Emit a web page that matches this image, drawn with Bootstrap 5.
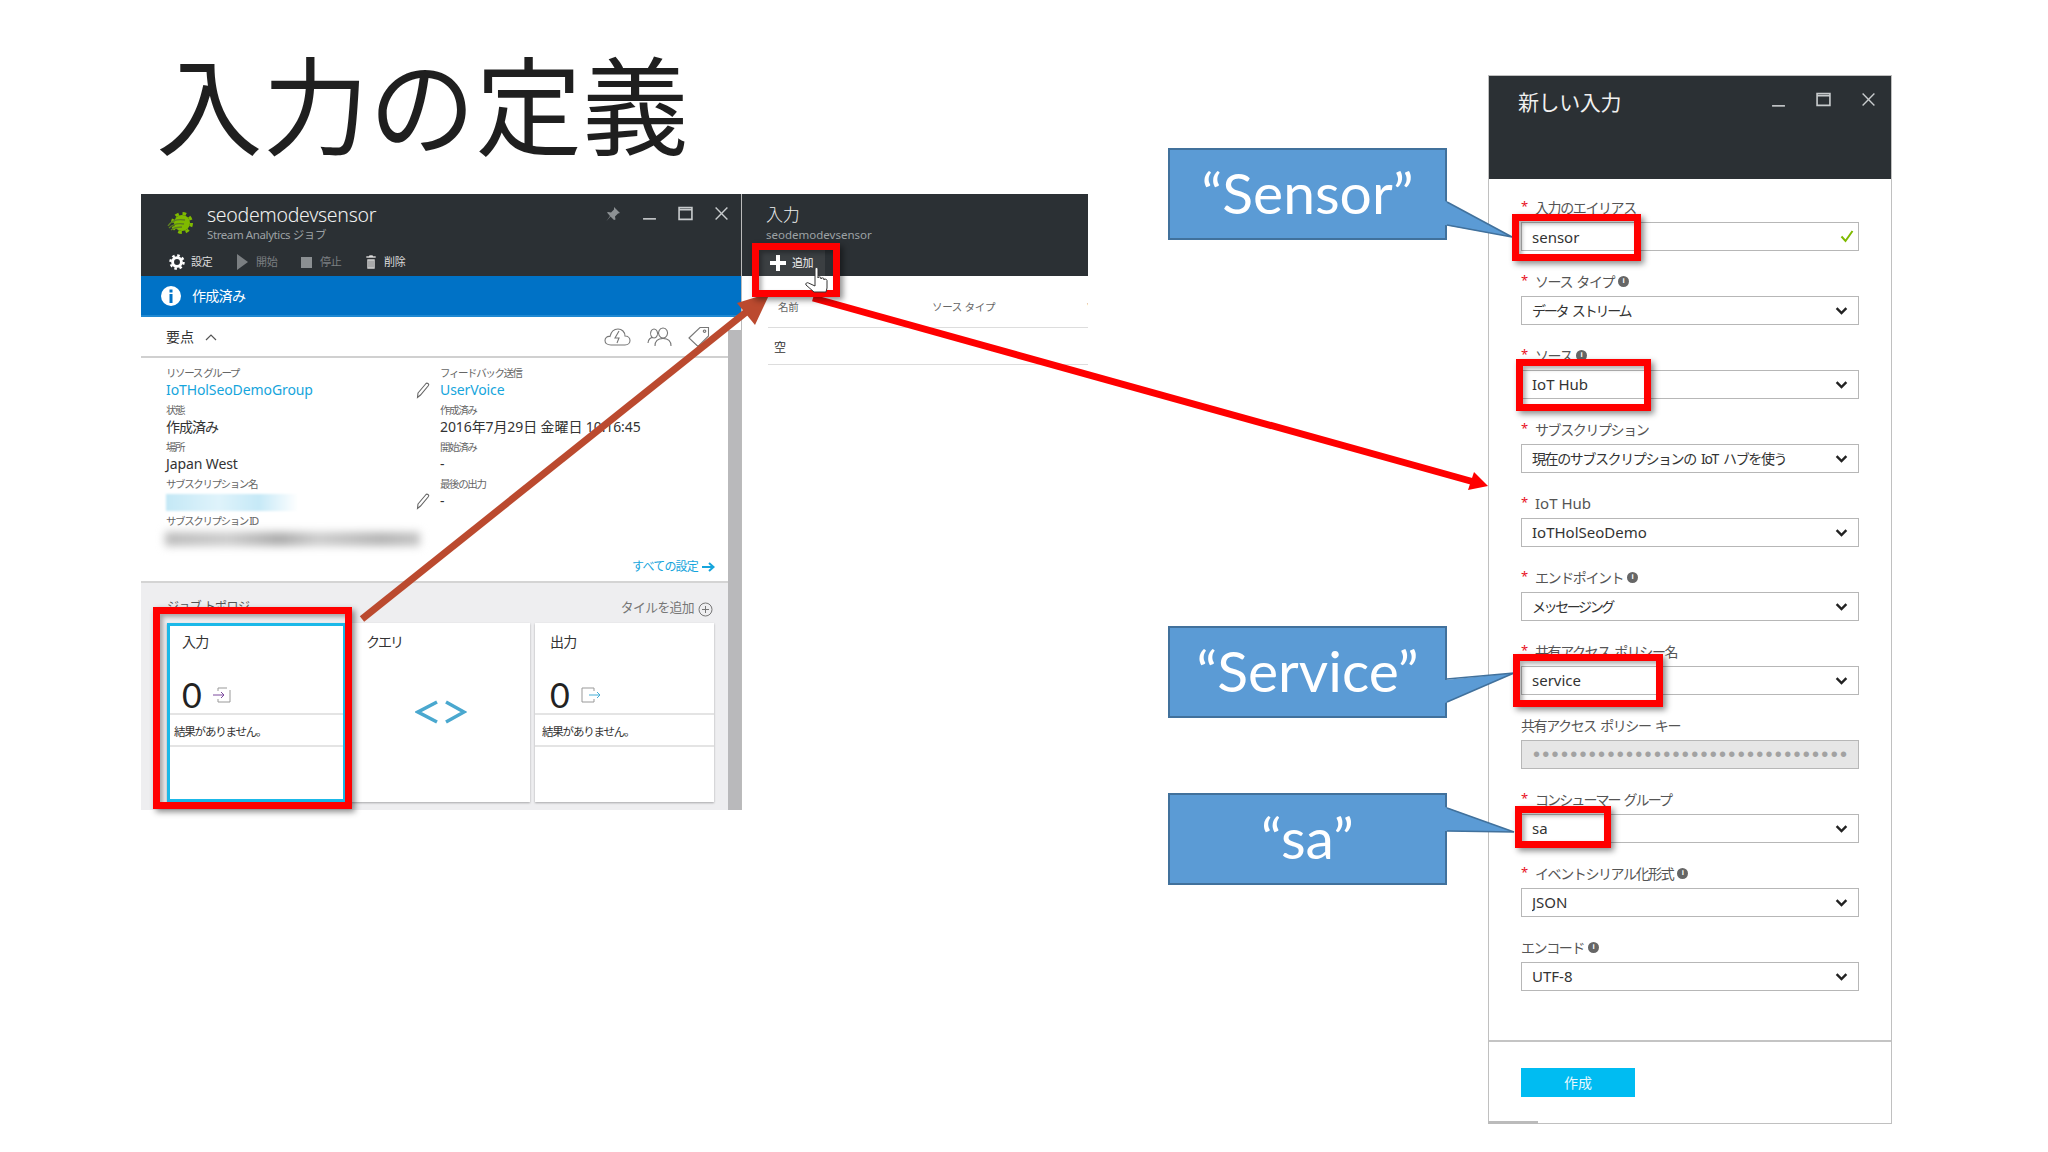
<!DOCTYPE html>
<html lang="ja">

<head>
  <meta charset="UTF-8">
  <meta name="viewport" content="width=device-width, initial-scale=1.0">
  <title>入力の定義</title>
  <link rel="stylesheet" href="https://cdn.jsdelivr.net/npm/bootstrap@5.3.2/dist/css/bootstrap.min.css">
  <style>
    body {
      margin: 0;
      background: #fff;
      font-family: "Noto Sans", "Noto Sans CJK JP", sans-serif;
      color: #333;
    }

    .slide { position: relative; width: 2048px; height: 1152px; overflow: hidden; }
    .slide-title {
      position: absolute; left: 156px; top: 48px; margin: 0;
      font: 400 106.5px/1 "Noto Sans CJK JP", sans-serif; color: #1f1f1f;
    }

    /* portal blades */
    .blades { position: absolute; left: 141px; top: 194px; width: 947px; height: 616px; }
    .blade-a { width: 600px; }
    .blade-b { width: 347px; border-left: 1px solid #bbb; overflow: hidden; }
    .dark-head { height: 82px; flex-shrink: 0; background: #2b3034; color: #fff; }
    .head-title { font-size: 19.5px; font-weight: 300; line-height: 26px; letter-spacing: -.3px; color: #f0f0f0; }
    .head-sub { font-size: 11.5px; line-height: 14px; letter-spacing: -.4px; color: #9da2a5; }
    .win-btns { gap: 21px; padding: 12px 12px 0 0; color: #c8cbcd; }
    .tool-row { height: 28px; padding-left: 28px; font-size: 11px; letter-spacing: -.3px; color: #ddd; }
    .tool-off { color: #7b7f82; }
    .info-bar { height: 41px; flex-shrink: 0; background: #0072c6; color: #fff; font-size: 14px; letter-spacing: -.7px; padding-left: 20px; gap: 11px; border-bottom: 2px solid #1e88d2; }
    .ess-head { height: 41px; flex-shrink: 0; border-bottom: 2px solid #d0d0d0; padding: 0 18px 0 25px; font-size: 14px; }
    .ess-chev { margin-left: 11px; }
    .ess-body { padding: 7px 0 0 25px; height: 199px; flex-shrink: 0; }
    .ess-col { width: 274px; }
    .ess-lbl { font-size: 10.5px; line-height: 16px; letter-spacing: -1.4px; color: #666; }
    .ess-val { font-size: 14px; line-height: 17px; height: 21px; letter-spacing: -.1px; padding-right: 10px; color: #333; }
    .ess-link { color: #16a5dc; }
    .blur-name { width: 132px; height: 17px; margin-top: 2px; background: linear-gradient(90deg, #c4e8f6, #dff3fb 40%, #c6e9f7 70%, #fff); filter: blur(1px); }
    .blur-id { width: 255px; height: 14px; margin: 3px 0 0 -1px; background: linear-gradient(90deg, #bbb, #ccc 25%, #aaa 45%, #ccc 60%, #b4b4b4 85%, #c4c4c4); filter: blur(4px); }
    .all-set { font-size: 12px; letter-spacing: -.8px; color: #16a5dc; padding-right: 13px; height: 19px; flex-shrink: 0; }
    .scroll-bar { width: 13px; flex-shrink: 0; margin-top: 13px; background: #b9b9bb; }
    .topo { height: 229px; flex-shrink: 0; background: #eeeef0; border-top: 2px solid #d4d4d4; padding: 15px 14px 0 26px; }
    .topo-head { height: 25px; font-size: 12px; letter-spacing: -.6px; color: #555; }
    .topo-add { color: #777; font-size: 12.8px; margin-right: 1px; }
    .tile-grid { display: grid; grid-template-columns: repeat(3, 1fr); gap: 5px; height: 179px; }
    .tile-box { background: #fff; box-shadow: 0 1px 2px rgba(0, 0, 0, .3); font-size: 14px; letter-spacing: -.8px; }
    .tile-on { outline: 3px solid #1bb8e8; outline-offset: -3px; }
    .tile-lbl { height: 48px; padding: 10px 0 0 15px; line-height: 18px; }
    .tile-lbl-q { padding-top: 10px; letter-spacing: -2px; }
    .tile-count { height: 44px; padding: 5px 0 0 15px; border-bottom: 2px solid #e4e4e4; font: 400 34px/1 "Lato", sans-serif; color: #222; gap: 12px; }
    .tile-note { height: 32px; padding: 4px 0 0 7px; border-bottom: 2px solid #e4e4e4; font-size: 11.5px; letter-spacing: -1.2px; }
    .tile-code { height: 131px; }
    .tbl-head { height: 52px; margin-left: 26px; border-bottom: 1px solid #ddd; padding-top: 24px; font-size: 10.5px; color: #666; }
    .tbl-cell { width: 154px; flex-shrink: 0; padding-left: 10px; white-space: nowrap; letter-spacing: -.3px; }
    .tbl-row { height: 37px; margin-left: 26px; border-bottom: 1px solid #ddd; font-size: 12px; padding: 11px 0 0 6px; }
    .add-btn { height: 26px; width: 67px; margin-left: 16px; background: #3b3f42; gap: 6px; font-size: 11px; letter-spacing: -.5px; color: #eee; padding-left: 12px; }

    /* new input panel */
    .new-input { position: absolute; left: 1488px; top: 75px; width: 404px; height: 1049px; border: 1px solid #c0c0c0; background: #fff; }
    .new-head { height: 103px; flex-shrink: 0; background: #2b3034; color: #f0f0f0; padding-left: 29px; }
    .new-title { font-size: 21px; letter-spacing: -.4px; line-height: 26px; margin-top: 13px; }
    .new-btns { gap: 0; color: #c8cbcd; }
    .form-area { padding: 21px 32px 0; height: 861px; flex-shrink: 0; }
    .fld-group { height: 74px; }
    .fld-lbl { display: flex; align-items: center; height: 22px; padding-bottom: 8px; margin: 0; font-size: 14px; letter-spacing: -1.4px; word-spacing: 2px; color: #555; }
    .lbl-latin { font-size: 15px; letter-spacing: 0; word-spacing: 0; }
    .lbl-tight { letter-spacing: -1.9px; }
    .req-star { color: #e81123; width: 14px; font-size: 13px; letter-spacing: 0; }
    .i-dot {
      display: inline-flex; align-items: center; justify-content: center; width: 11px; height: 11px; margin-left: 4px;
      border-radius: 50%; background: #666; color: #fff; font: 700 8px/1 "Liberation Sans", sans-serif; letter-spacing: 0;
    }
    .fld-ctl.form-control, .fld-ctl.form-select {
      height: 29px; padding: 0 30px 0 10px; border: 1px solid #b7b7b7; border-radius: 0; box-shadow: none;
      font-size: 15px; color: #333; line-height: 27px;
    }
    .fld-ctl.form-select {
      background-size: 13px 10px; background-position: right 10px center;
      background-image: url("data:image/svg+xml,%3csvg xmlns='http://www.w3.org/2000/svg' viewBox='0 0 16 12'%3e%3cpath fill='none' stroke='%23222' stroke-width='3' d='M2 2.500l6 6 6-6'/%3e%3c/svg%3e");
    }
    .cjk-long.fld-ctl { font-size: 14px; letter-spacing: -1.4px; word-spacing: 3px; }
    .cjk-tight.fld-ctl { font-size: 14px; letter-spacing: -2.2px; word-spacing: 3px; }
    .cjk-tighter.fld-ctl { font-size: 14px; letter-spacing: -2.4px; }
    .dots-ctl.form-control:disabled {
      background: #e6e6e6; color: #a2a2a2; opacity: 1;
      font: 400 20px/27px "Liberation Sans", sans-serif; letter-spacing: 2.3px; padding: 0 0 0 11px;
    }
    .ok-tick { position: absolute; right: 5px; top: 7px; }
    .new-foot { border-top: 2px solid #c4c4c4; padding: 26px 0 0 32px; }
    .make-btn { width: 114px; height: 29px; padding: 0; background: #00bcf2; color: #e6f8fe; font-size: 14px; border-radius: 0; border: 0; }
    .corner-bar { position: absolute; left: -1px; bottom: -1px; width: 50px; height: 3px; background: #bbb; }

    /* callouts */
    .call-box {
      position: absolute; left: 1168px; width: 279px; height: 92px; background: #5b9bd5; border: 2px solid #41719c;
      padding-bottom: 3px; color: #fff; font: 400 57px/1 "Lato", sans-serif;
    }
    .call-sensor { top: 148px; }
    .call-service { top: 626px; }
    .call-sa { top: 793px; }
    .draw-layer { position: absolute; left: 0; top: 0; }

    /* red frames */
    .red-frame { position: absolute; border: 7px solid #f00; box-shadow: 3px 3px 6px rgba(0, 0, 0, .45), inset 3px 3px 4px rgba(0, 0, 0, .3); }
    .rf-tile { left: 153px; top: 607px; width: 199px; height: 202px; }
    .rf-add { left: 752px; top: 243px; width: 88px; height: 54px; }
    .rf-sensor { left: 1512px; top: 214px; width: 129px; height: 47px; }
    .rf-hub { left: 1516px; top: 359px; width: 135px; height: 52px; }
    .rf-service { left: 1513px; top: 654px; width: 150px; height: 53px; }
    .rf-sa { left: 1515px; top: 806px; width: 96px; height: 42px; }
    .hand-cursor { position: absolute; left: 804px; top: 267px; }
  </style>
</head>

<body>
  <svg width="0" height="0" class="position-absolute">
    <symbol id="ic-min" viewBox="0 0 14 14"><path d="M1 12h12" stroke="currentColor" stroke-width="1.500"/></symbol>
    <symbol id="ic-max" viewBox="0 0 14 14"><path d="M1 1.500h12v11H1z M1 3.500h12" fill="none" stroke="currentColor" stroke-width="1.500"/></symbol>
    <symbol id="ic-close" viewBox="0 0 14 14"><path d="M1.500 1.500l11 11M12.500 1.500l-11 11" stroke="currentColor" stroke-width="1.300"/></symbol>
    <symbol id="ic-pencil" viewBox="0 0 14 18"><path d="M2 12L10 2.500c1-1 3.500 .5 2.500 2L4.500 14 1.500 16.500z" fill="none" stroke="#666" stroke-width="1.100"/></symbol>
  </svg>

  <div class="slide">
    <h1 class="slide-title">入力の定義</h1>

    <div class="blades d-flex">
      <section class="blade-a d-flex flex-column">
        <div class="dark-head d-flex flex-column">
          <div class="d-flex">
            <div class="d-flex gap-2 flex-grow-1" style="padding:8px 0 0 26px">
              <svg width="27" height="24" viewBox="0 0 27 24" style="margin:9px 5px 0 0">
                <circle cx="15" cy="12" r="8" fill="#7fba00"/>
                <circle cx="15" cy="12" r="9.500" fill="none" stroke="#7fba00" stroke-width="3" stroke-dasharray="3.700 3.800"/>
                <path d="M1 15c4-6 9-7 17-6M2 17c4-4 9-5 15-4M4 19c4-3 7-3 11-3" fill="none" stroke="#5d7f22" stroke-width="1.300"/>
              </svg>
              <div>
                <div class="head-title">seodemodevsensor</div>
                <div class="head-sub">Stream Analytics ジョブ</div>
              </div>
            </div>
            <div class="win-btns d-flex">
              <svg width="16" height="16" viewBox="0 0 16 16"><path d="M9 1l6 6-2 .5-3 3 .5 3L9 14 5.500 10.500 1.500 15l3.500-5L2 6.500 3 6l3 .5 3-3z" fill="#8d9194"/></svg>
              <svg width="15" height="15"><use href="#ic-min"/></svg>
              <svg width="15" height="15"><use href="#ic-max"/></svg>
              <svg width="15" height="15"><use href="#ic-close"/></svg>
            </div>
          </div>
          <div class="tool-row d-flex align-items-center mt-auto">
            <svg width="16" height="16" viewBox="0 0 20 20" class="me-1">
              <circle cx="10" cy="10" r="5.500" fill="none" stroke="#fff" stroke-width="3.600"/>
              <circle cx="10" cy="10" r="8.200" fill="none" stroke="#fff" stroke-width="3" stroke-dasharray="3.220 3.220"/>
            </svg>
            <span style="width:48px;padding-left:2px">設定</span>
            <svg width="11" height="16" viewBox="0 0 11 16"><path d="M0 0l11 8-11 8z" fill="#7b7f82"/></svg>
            <span class="tool-off" style="width:53px;padding-left:8px">開始</span>
            <svg width="11" height="11" viewBox="0 0 11 11"><path d="M0 0h11v11H0z" fill="#8b8f92"/></svg>
            <span class="tool-off" style="width:54px;padding-left:8px">停止</span>
            <svg width="10" height="14" viewBox="0 0 10 14"><path d="M3 0h4v1h3v2H0V1h3zM1 4h8v10H1zM3 5.500v7M5 5.500v7M7 5.500v7" fill="#ddd" stroke="#2b3034" stroke-width=".6"/></svg>
            <span class="ps-2">削除</span>
          </div>
        </div>
        <div class="info-bar d-flex align-items-center">
          <svg width="20" height="20" viewBox="0 0 20 20"><circle cx="10" cy="10" r="10" fill="#fff"/><path d="M8.500 3.500h3v3h-3zM8.500 8h3v9h-3z" fill="#0072c6"/></svg>
          <span>作成済み</span>
        </div>
        <div class="d-flex flex-grow-1">
          <div class="flex-grow-1 d-flex flex-column">
            <div class="ess-head d-flex align-items-center">
              <span>要点</span>
              <svg class="ess-chev" width="12" height="8" viewBox="0 0 12 8"><path d="M1 7l5-5 5 5" fill="none" stroke="#555" stroke-width="1.200"/></svg>
              <div class="ms-auto d-flex align-items-center" style="gap:16px">
                <svg width="27" height="18" viewBox="0 0 27 18"><path d="M7 17C3 17 1 15 1 12.500S3 8 6 8.500C7 4 10 1 14 1c4 0 7 3 7 7 3 0 5 2 5 4.500S24 17 21 17zM15 3l-4 7h4l-2 5" fill="none" stroke="#777" stroke-width="1.100"/></svg>
                <svg width="25" height="20" viewBox="0 0 25 20"><path d="M7 2a3.500 4.500 0 1 0 .1 0zM1 16c0-4 3-5.500 5-5.500M16 1a4.500 5 0 1 0 .1 0zM8 19c0-5 3-7.500 8-7.500s8 2.500 8 7.500" fill="none" stroke="#777" stroke-width="1.100"/></svg>
                <svg width="22" height="21" viewBox="0 0 22 21"><path d="M1 12L12 1.500h8.500V10L10 20.500zM16.500 4a1.200 1.200 0 1 0 .1 0z" fill="none" stroke="#777" stroke-width="1.100"/></svg>
              </div>
            </div>
            <div class="ess-body d-flex">
              <div class="ess-col">
                <div class="ess-lbl">リソース グループ</div>
                <div class="ess-val ess-link d-flex justify-content-between">IoTHolSeoDemoGroup<svg width="14" height="18"><use href="#ic-pencil"/></svg></div>
                <div class="ess-lbl">状態</div>
                <div class="ess-val" style="letter-spacing:-1px">作成済み</div>
                <div class="ess-lbl">場所</div>
                <div class="ess-val">Japan West</div>
                <div class="ess-lbl">サブスクリプション名</div>
                <div class="ess-val d-flex justify-content-between"><div class="blur-name"></div><svg width="14" height="18"><use href="#ic-pencil"/></svg></div>
                <div class="ess-lbl">サブスクリプション ID</div>
                <div class="ess-val"><div class="blur-id"></div></div>
              </div>
              <div>
                <div class="ess-lbl">フィードバック送信</div>
                <div class="ess-val ess-link">UserVoice</div>
                <div class="ess-lbl">作成済み</div>
                <div class="ess-val">2016年7月29日 金曜日 10:16:45</div>
                <div class="ess-lbl">開始済み</div>
                <div class="ess-val">-</div>
                <div class="ess-lbl">最後の出力</div>
                <div class="ess-val">-</div>
              </div>
            </div>
            <div class="all-set d-flex align-items-center justify-content-end gap-1">
              すべての設定
              <svg width="13" height="10" viewBox="0 0 13 10"><path d="M0 5h11M7 1l4.500 4L7 9" fill="none" stroke="#16a5dc" stroke-width="2"/></svg>
            </div>
            <div class="topo mt-auto">
              <div class="topo-head d-flex justify-content-between">
                <span>ジョブ トポロジ</span>
                <span class="topo-add d-flex align-items-start gap-1">タイルを追加
                  <svg width="15" height="15" viewBox="0 0 15 15" class="mt-1"><circle cx="7.500" cy="7.500" r="6.500" fill="none" stroke="#777"/><path d="M7.500 4v7M4 7.500h7" stroke="#777"/></svg>
                </span>
              </div>
              <div class="tile-grid">
                <div class="tile-box tile-on">
                  <div class="tile-lbl">入力</div>
                  <div class="tile-count d-flex align-items-center">0
                    <svg width="18" height="16" viewBox="0 0 18 16"><path d="M5 4V1h12v14H5v-3" fill="none" stroke="#999" stroke-dasharray="12 5 40"/><path d="M0 8h11M8 5l3 3-3 3" fill="none" stroke="#7d4a9e"/></svg>
                  </div>
                  <div class="tile-note d-flex align-items-center">結果がありません。</div>
                </div>
                <div class="tile-box">
                  <div class="tile-lbl tile-lbl-q">クエリ</div>
                  <div class="tile-code d-flex justify-content-center">
                    <svg width="52" height="24" viewBox="0 0 52 24" style="margin-top:29px"><path d="M22 2L3 12l19 10M31 2l18 10-18 10" fill="none" stroke="#4aa8cf" stroke-width="3.500"/></svg>
                  </div>
                </div>
                <div class="tile-box">
                  <div class="tile-lbl">出力</div>
                  <div class="tile-count d-flex align-items-center">0
                    <svg width="20" height="16" viewBox="0 0 20 16"><path d="M13 4V1H1v14h12v-3" fill="none" stroke="#999"/><path d="M8 8h11M16 5l3 3-3 3" fill="none" stroke="#45add6"/></svg>
                  </div>
                  <div class="tile-note d-flex align-items-center">結果がありません。</div>
                </div>
              </div>
            </div>
          </div>
          <div class="scroll-bar"></div>
        </div>
      </section>

      <section class="blade-b">
        <div class="dark-head d-flex flex-column">
          <div style="padding:8px 0 0 24px">
            <div class="head-title" style="font-size:17px">入力</div>
            <div class="head-sub" style="font-size:11.5px;letter-spacing:0">seodemodevsensor</div>
          </div>
          <div class="add-btn d-flex align-items-center mt-auto">
            <svg width="16" height="16" viewBox="0 0 16 16"><path d="M6 0h4v6h6v4h-6v6H6v-6H0V6h6z" fill="#fff"/></svg>
            <span>追加</span>
          </div>
        </div>
        <div class="tbl-head d-flex">
          <div class="tbl-cell">名前</div>
          <div class="tbl-cell">ソース タイプ</div>
          <div class="tbl-cell">ソース</div>
        </div>
        <div class="tbl-row">空</div>
      </section>
    </div>

    <section class="new-input d-flex flex-column">
      <div class="new-head d-flex justify-content-between">
        <div class="new-title">新しい入力</div>
        <div class="new-btns d-flex">
          <svg width="15" height="15" style="margin:17px 29px 0 0"><use href="#ic-min"/></svg>
          <svg width="17" height="15" style="margin:16px 29px 0 0"><use href="#ic-max"/></svg>
          <svg width="15" height="15" style="margin:16px 15px 0 0"><use href="#ic-close"/></svg>
        </div>
      </div>
      <form class="form-area">
        <div class="fld-group">
          <label class="fld-lbl"><span class="req-star">*</span>入力のエイリアス</label>
          <div class="position-relative">
            <input class="form-control fld-ctl" value="sensor">
            <svg class="ok-tick" width="14" height="14" viewBox="0 0 14 14"><path d="M1.500 7.500l4 4.500 7-10" fill="none" stroke="#7fba00" stroke-width="2"/></svg>
          </div>
        </div>
        <div class="fld-group">
          <label class="fld-lbl"><span class="req-star">*</span>ソース タイプ<span class="i-dot">i</span></label>
          <select class="form-select fld-ctl cjk-tight"><option>データ ストリーム</option></select>
        </div>
        <div class="fld-group">
          <label class="fld-lbl"><span class="req-star">*</span>ソース<span class="i-dot">i</span></label>
          <select class="form-select fld-ctl"><option>IoT Hub</option></select>
        </div>
        <div class="fld-group">
          <label class="fld-lbl"><span class="req-star">*</span>サブスクリプション</label>
          <select class="form-select fld-ctl cjk-long"><option>現在のサブスクリプションの IoT ハブを使う</option></select>
        </div>
        <div class="fld-group">
          <label class="fld-lbl lbl-latin"><span class="req-star">*</span>IoT Hub</label>
          <select class="form-select fld-ctl"><option>IoTHolSeoDemo</option></select>
        </div>
        <div class="fld-group">
          <label class="fld-lbl"><span class="req-star">*</span>エンドポイント<span class="i-dot">i</span></label>
          <select class="form-select fld-ctl cjk-tighter"><option>メッセージング</option></select>
        </div>
        <div class="fld-group">
          <label class="fld-lbl"><span class="req-star">*</span>共有アクセス ポリシー名</label>
          <select class="form-select fld-ctl"><option>service</option></select>
        </div>
        <div class="fld-group">
          <label class="fld-lbl">共有アクセス ポリシー キー</label>
          <input class="form-control fld-ctl dots-ctl" disabled value="••••••••••••••••••••••••••••••••••">
        </div>
        <div class="fld-group">
          <label class="fld-lbl lbl-tight"><span class="req-star">*</span>コンシューマー グループ</label>
          <select class="form-select fld-ctl"><option>sa</option></select>
        </div>
        <div class="fld-group">
          <label class="fld-lbl"><span class="req-star">*</span>イベントシリアル化形式<span class="i-dot">i</span></label>
          <select class="form-select fld-ctl"><option>JSON</option></select>
        </div>
        <div class="fld-group">
          <label class="fld-lbl">エンコード<span class="i-dot">i</span></label>
          <select class="form-select fld-ctl"><option>UTF-8</option></select>
        </div>
      </form>
      <div class="new-foot">
        <button type="button" class="btn make-btn">作成</button>
      </div>
      <div class="corner-bar"></div>
    </section>

    <div class="call-box call-sensor d-flex align-items-center justify-content-center">“Sensor”</div>
    <div class="call-box call-service d-flex align-items-center justify-content-center">“Service”</div>
    <div class="call-box call-sa d-flex align-items-center justify-content-center">“sa”</div>

    <svg class="draw-layer" width="2048" height="1152">
      <!-- callout tails -->
      <g fill="#5b9bd5">
        <path d="M1445 201L1512 237 1445 225z"/>
        <path d="M1445 680L1514 673 1445 703z"/>
        <path d="M1445 807L1514 832 1445 831z"/>
      </g>
      <g fill="none" stroke="#41719c" stroke-width="1.500">
        <path d="M1447 202L1512 237 1447 225"/>
        <path d="M1447 679L1514 673 1447 702"/>
        <path d="M1447 808L1514 832 1447 831"/>
      </g>
      <!-- brown arrow from input tile to add button -->
      <path d="M362 619L755 305" stroke="#bb4a2f" stroke-width="7"/>
      <path d="M770 293L737 303 755 325z" fill="#bb4a2f"/>
      <!-- red arrow from add button to panel -->
      <path d="M813 298L1474 482" stroke="#f00" stroke-width="7"/>
      <path d="M1488 486L1474 472 1468 490z" fill="#f00"/>
    </svg>

    <div class="red-frame rf-tile"></div>
    <div class="red-frame rf-add"></div>
    <div class="red-frame rf-sensor"></div>
    <div class="red-frame rf-hub"></div>
    <div class="red-frame rf-service"></div>
    <div class="red-frame rf-sa"></div>

    <svg class="hand-cursor" width="27" height="26" viewBox="0 0 27 26">
      <path d="M11 2c0-2 3-2 3 0v9c0-1.500 3-1.500 3 0v1c0-1.500 3-1.500 3 0v1c0-1.500 3-1 3 .5V21l-1 4H10l-8-7c-1-1.500 1-3 2.500-2L11 19z" fill="#fff" stroke="#333"/>
    </svg>
  </div>

  <script src="https://cdn.jsdelivr.net/npm/bootstrap@5.3.2/dist/js/bootstrap.bundle.min.js"></script>
</body>

</html>
